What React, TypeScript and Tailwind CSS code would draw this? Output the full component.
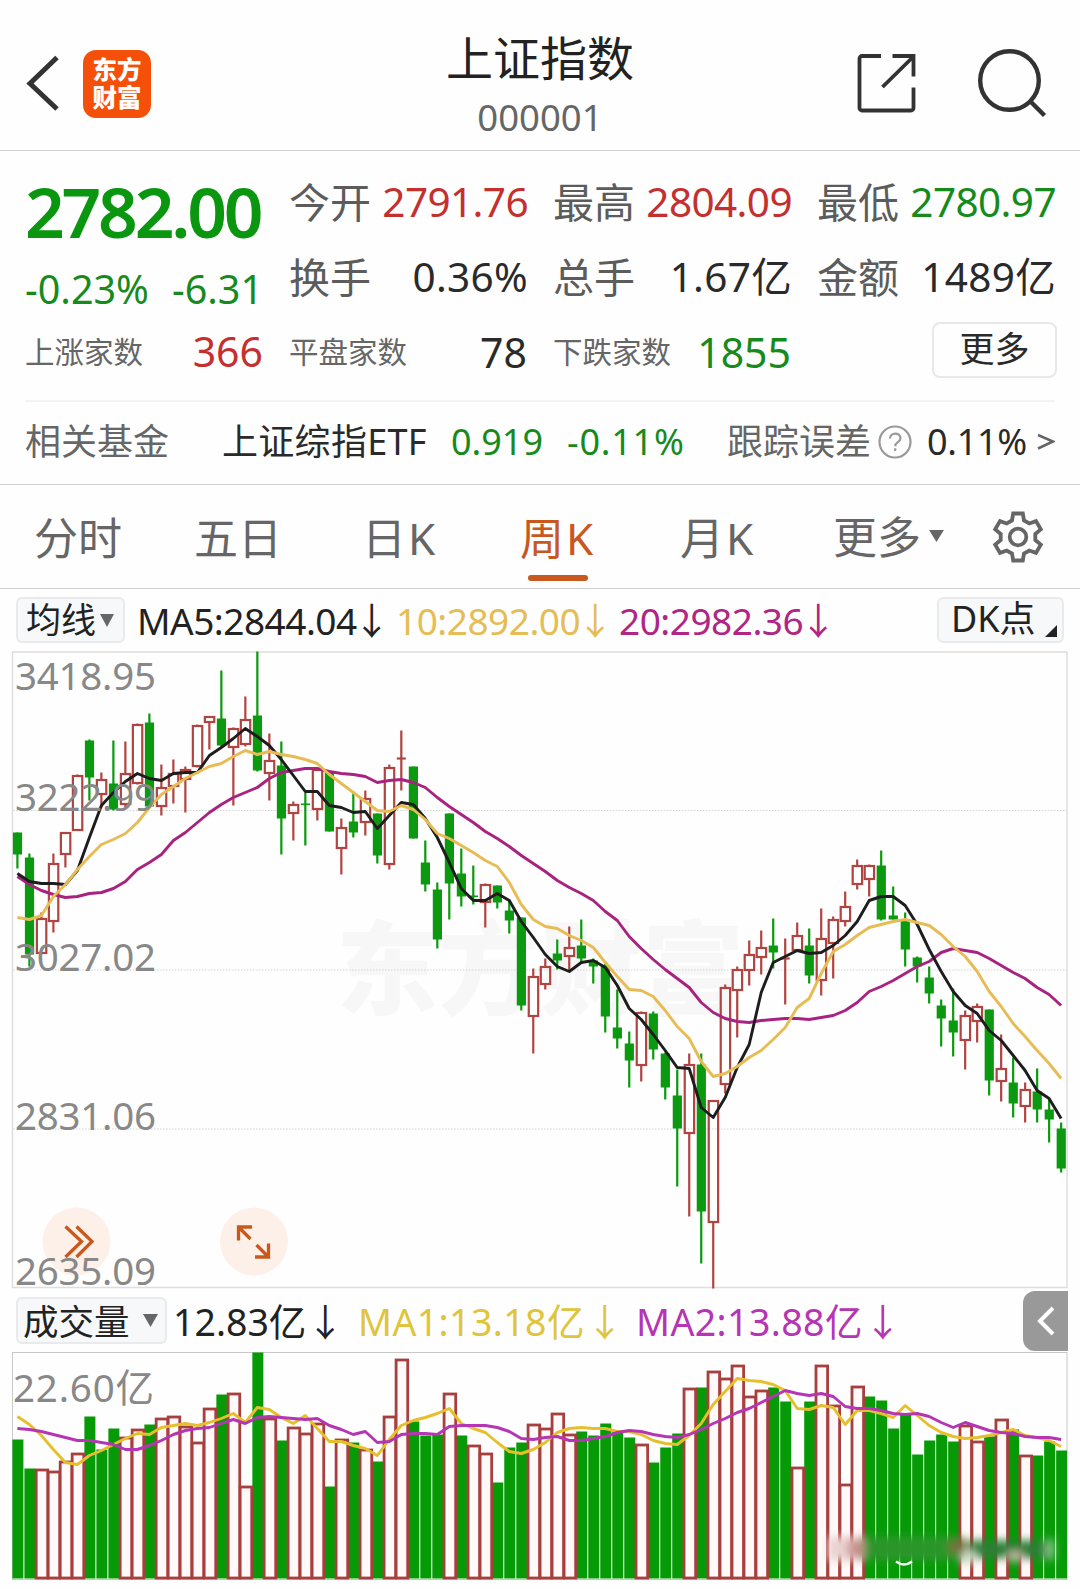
import React from "react";

type Candle = [string, number, number, number, number];

const STEP = 11.997;
const START = 17.4;
const cx = (i: number) => START + i * STEP;

// direction, body top, body bottom, high, low
const candles: Candle[] = [
  ["d", 833, 855, 833, 869], ["d", 858, 955, 854, 967], ["u", 919, 954, 913, 954], ["u", 864, 922, 854, 933],
  ["u", 833, 855, 833, 868], ["u", 776, 831, 775, 831], ["d", 741, 778, 740, 801], ["u", 780, 795, 773, 808],
  ["d", 784, 810, 741, 811], ["u", 774, 805, 742, 808], ["u", 725, 784, 724, 785], ["d", 723, 807, 714, 808],
  ["u", 788, 807, 765, 816], ["u", 774, 787, 760, 804], ["u", 770, 780, 767, 813], ["u", 726, 767, 725, 768],
  ["u", 717, 723, 717, 750], ["d", 719, 746, 671, 747], ["u", 729, 748, 728, 806], ["u", 720, 745, 697, 747],
  ["d", 716, 771, 652, 772], ["u", 761, 774, 734, 801], ["d", 766, 819, 742, 855], ["u", 805, 814, 802, 841],
  ["d", 804, 805, 793, 846], ["u", 770, 810, 769, 821], ["d", 772, 832, 772, 832], ["u", 828, 849, 819, 875],
  ["d", 822, 833, 792, 838], ["u", 799, 823, 791, 836], ["d", 814, 856, 814, 864], ["u", 768, 865, 765, 870],
  ["u", 759, 759, 731, 791], ["d", 767, 839, 767, 839], ["d", 863, 885, 841, 892], ["d", 890, 940, 883, 949],
  ["d", 814, 884, 814, 920], ["d", 874, 897, 849, 907], ["d", 896, 897, 866, 905], ["u", 885, 903, 884, 928],
  ["d", 886, 903, 886, 909], ["d", 911, 921, 900, 934], ["d", 918, 1006, 918, 1011], ["u", 977, 1017, 969, 1054],
  ["u", 967, 985, 959, 990], ["d", 954, 961, 940, 970], ["u", 948, 957, 927, 971], ["d", 946, 959, 920, 964],
  ["d", 961, 967, 959, 984], ["d", 966, 1017, 964, 1033], ["d", 1028, 1039, 990, 1049], ["d", 1044, 1061, 1032, 1088],
  ["u", 1013, 1066, 1012, 1082], ["d", 1014, 1050, 1012, 1060], ["d", 1054, 1088, 1053, 1100], ["d", 1096, 1129, 1070, 1187],
  ["u", 1065, 1134, 1054, 1217], ["d", 1065, 1212, 1054, 1264], ["u", 1101, 1223, 1101, 1289], ["u", 988, 1085, 985, 1094],
  ["u", 970, 991, 967, 1038], ["u", 955, 971, 941, 986], ["u", 948, 958, 931, 975], ["d", 946, 953, 919, 969],
  ["u", 959, 959, 939, 1005], ["u", 936, 951, 923, 951], ["d", 946, 976, 929, 984], ["u", 939, 981, 909, 996],
  ["u", 920, 944, 917, 979], ["u", 907, 922, 892, 927], ["u", 866, 885, 860, 890], ["u", 866, 880, 865, 897],
  ["d", 866, 920, 851, 921], ["d", 916, 920, 887, 920], ["d", 921, 950, 913, 967], ["d", 958, 967, 957, 983],
  ["d", 978, 994, 967, 1004], ["d", 1006, 1019, 1000, 1047], ["d", 1021, 1033, 989, 1057], ["u", 1016, 1041, 1011, 1070],
  ["u", 1007, 1022, 1004, 1043], ["d", 1010, 1081, 1010, 1096], ["u", 1069, 1082, 1035, 1102], ["d", 1083, 1104, 1058, 1118],
  ["u", 1090, 1107, 1083, 1123], ["d", 1092, 1110, 1069, 1123], ["d", 1110, 1120, 1100, 1143], ["d", 1129, 1169, 1123, 1173],
];

const ma5 = [
  874, 882, 884, 884, 885, 871, 838, 806, 793, 782, 774, 779, 781, 774, 773, 773, 756, 748, 739, 729, 737, 746,
  760, 776, 792, 792, 806, 808, 813, 812, 829, 816, 803, 805, 819, 838, 863, 889, 901, 901, 894, 901, 922, 938,
  955, 967, 972, 963, 961, 968, 986, 1009, 1020, 1035, 1051, 1068, 1069, 1108, 1118, 1098, 1068, 1045, 993, 963, 957, 951,
  954, 953, 946, 936, 922, 901, 897, 897, 906, 925, 950, 972, 992, 1006, 1014, 1031, 1041, 1056, 1071, 1091, 1099, 1119,
];

const ma10 = [
  918, 920, 916, 897, 885, 870, 857, 845, 840, 834, 823, 808, 795, 787, 779, 773, 767, 764, 757, 751, 755, 752,
  755, 757, 760, 764, 775, 784, 793, 802, 811, 812, 806, 810, 820, 834, 839, 846, 853, 861, 867, 883, 905, 920,
  927, 929, 936, 941, 948, 963, 977, 990, 991, 997, 1011, 1027, 1039, 1062, 1077, 1074, 1067, 1058, 1051, 1040, 1028, 1008,
  999, 974, 952, 945, 936, 928, 925, 922, 920, 923, 926, 935, 947, 957, 972, 992, 1007, 1024, 1037, 1051, 1064, 1079,
];

const ma20 = [
  877, 885, 891, 895, 898, 897, 894, 893, 889, 882, 870, 863, 855, 841, 833, 823, 813, 805, 798, 793, 788, 779,
  773, 771, 769, 769, 772, 774, 775, 777, 783, 781, 780, 783, 788, 798, 807, 815, 823, 832, 839, 847, 856, 864,
  872, 881, 888, 894, 901, 912, 921, 937, 949, 960, 970, 979, 988, 1003, 1013, 1019, 1022, 1023, 1021, 1020, 1019, 1019,
  1020, 1018, 1016, 1011, 1003, 992, 987, 981, 974, 967, 962, 953, 949, 951, 953, 959, 966, 973, 979, 988, 995, 1006,
];

const volumes = [
  1440, 1469, 1470, 1472, 1462, 1454, 1417, 1450, 1429, 1438, 1430, 1425, 1419, 1417, 1427, 1443, 1409, 1395, 1394, 1487, 1353, 1419,
  1441, 1428, 1434, 1424, 1487, 1440, 1443, 1450, 1462, 1417, 1360, 1422, 1436, 1435, 1394, 1436, 1446, 1454, 1483, 1448, 1443, 1425,
  1429, 1414, 1435, 1432, 1436, 1424, 1431, 1438, 1445, 1463, 1448, 1434, 1389, 1388, 1372, 1379, 1366, 1397, 1391, 1388, 1402, 1468,
  1402, 1366, 1406, 1485, 1387, 1397, 1401, 1429, 1415, 1455, 1441, 1435, 1442, 1426, 1442, 1437, 1420, 1430, 1456, 1456, 1442, 1451,
];

// up bars in the volume chart, everything else is a down bar
const upBars = new Set([
  2, 3, 4, 5, 9, 10, 12, 13, 14, 15, 16, 18, 19, 21, 23, 24, 25, 27, 29, 31, 32, 36, 38, 39, 43, 44, 45, 46, 52, 56,
  58, 59, 60, 61, 62, 65, 67, 68, 69, 70, 79, 80, 82, 84,
]);

const volMa1 = [
  1417, 1425, 1436, 1450, 1463, 1465, 1456, 1451, 1445, 1439, 1434, 1435, 1428, 1426, 1424, 1426, 1423, 1419, 1414, 1423, 1408, 1410,
  1418, 1424, 1416, 1429, 1442, 1442, 1446, 1449, 1456, 1440, 1426, 1421, 1418, 1414, 1409, 1424, 1429, 1433, 1443, 1452, 1454, 1450,
  1443, 1433, 1429, 1428, 1429, 1429, 1432, 1432, 1435, 1441, 1444, 1445, 1436, 1424, 1405, 1392, 1379, 1381, 1382, 1385, 1391, 1409,
  1410, 1406, 1408, 1425, 1411, 1411, 1414, 1418, 1406, 1416, 1426, 1433, 1437, 1439, 1438, 1436, 1433, 1430, 1436, 1438, 1441, 1447,
];

const volMa2 = [
  1429, 1430, 1432, 1435, 1438, 1441, 1441, 1443, 1445, 1450, 1450, 1446, 1441, 1435, 1431, 1429, 1428, 1424, 1420, 1424, 1418, 1417,
  1418, 1419, 1420, 1419, 1426, 1430, 1435, 1432, 1443, 1442, 1435, 1434, 1434, 1435, 1427, 1426, 1426, 1426, 1428, 1432, 1439, 1440,
  1438, 1437, 1441, 1441, 1439, 1437, 1433, 1431, 1432, 1435, 1437, 1438, 1435, 1430, 1424, 1419, 1413, 1409, 1403, 1397, 1391, 1394,
  1396, 1394, 1397, 1407, 1409, 1409, 1411, 1414, 1415, 1414, 1417, 1423, 1428, 1423, 1427, 1431, 1433, 1434, 1437, 1438, 1438, 1440,
];

const toPoints = (ys: number[]) => ys.map((y, i) => `${cx(i).toFixed(1)},${y}`).join(" ");

const Line = ({ data, color }: { data: number[]; color: string }) => (
  <polyline points={toPoints(data)} fill="none" stroke={color} strokeWidth={2.9} strokeLinejoin="round" />
);

const Header = () => (
  <header className="flex h-[151px] items-start justify-between border-b border-[#d2d2d2] pl-[25px] pr-[33px]">
    <div className="flex w-[240px] items-center pt-[50px]">
      <svg width="36" height="68" viewBox="0 0 36 68" fill="none" stroke="#333" strokeWidth="5">
        <path d="M32 7.500 5 33.500 32 59" />
      </svg>
      <div className="ml-[22px] flex h-[68px] w-[68px] flex-col items-center justify-center rounded-[13px] bg-[#f4500a] text-[24.500px] font-black leading-[28px] text-white">
        <span>东方</span>
        <span>财富</span>
      </div>
    </div>
    <div className="flex flex-col items-center pl-[8px] pt-[31px]">
      <h1 className="text-[47px] leading-[54px] text-[#222]">上证指数</h1>
      <p className="mt-[10px] text-[36.500px] leading-[44px] text-[#666]">000001</p>
    </div>
    <div className="flex w-[240px] justify-end pt-[46px]">
      <svg width="62" height="72" viewBox="856 46 62 72" fill="none" stroke="#333" strokeWidth="3.800">
        <path d="M881 56H862a2.500 2.500 0 0 0-2.500 2.500V108a2.500 2.500 0 0 0 2.500 2.500H911a2.500 2.500 0 0 0 2.500-2.500V87.500" />
        <path d="M892.500 56H913.500V76.500M913 57 882.500 87" />
      </svg>
      <svg className="ml-[58px]" width="71" height="72" viewBox="976 46 71 72" fill="none" stroke="#333" strokeWidth="4.400">
        <circle cx="1009.500" cy="80.500" r="29.300" />
        <path d="M1030 101 1044.500 115.500" />
      </svg>
    </div>
  </header>
);

const stats = [
  { label: "今开", value: "2791.76", color: "text-[#c4302f]" },
  { label: "最高", value: "2804.09", color: "text-[#c4302f]" },
  { label: "最低", value: "2780.97", color: "text-[#168b1c]" },
  { label: "换手", value: "0.36%", color: "text-[#2a2a2a]" },
  { label: "总手", value: "1.67亿", color: "text-[#2a2a2a]" },
  { label: "金额", value: "1489亿", color: "text-[#2a2a2a]" },
];

const Quote = () => (
  <section className="px-[25px]">
    <div className="flex h-[251px] gap-[26px] border-b-2 border-[#f4f4f4] pt-[14px]">
      <div className="flex w-[238px] flex-col">
        <div className="flex h-[92px] items-center text-[69.500px] font-semibold leading-[92px] tracking-[-3.200px] text-[#0b960f]">
          2782.00
        </div>
        <div className="flex h-[65px] items-center justify-between text-[39.500px] text-[#168b1c]">
          <span>-0.23%</span>
          <span>-6.31</span>
        </div>
        <div className="flex h-[60px] items-center justify-between">
          <span className="text-[29.500px] text-[#666]">上涨家数</span>
          <span className="text-[41px] text-[#c4302f]">366</span>
        </div>
      </div>
      <div className="grid h-[225px] w-[766px] grid-cols-3 grid-rows-3 gap-x-[26px]">
        {stats.map((s) => (
          <div key={s.label} className="flex items-center justify-between">
            <span className="text-[41px] text-[#5c5c5c]">{s.label}</span>
            <span className={`-mr-[1px] text-[40.500px] ${s.value.length > 6 ? "tracking-[-0.600px]" : "tracking-[0.300px]"} ${s.color}`}>
              {s.value}
            </span>
          </div>
        ))}
        <div className="flex items-center justify-between">
          <span className="text-[29.500px] text-[#666]">平盘家数</span>
          <span className="text-[41px] text-[#2a2a2a]">78</span>
        </div>
        <div className="flex items-center justify-between">
          <span className="text-[29.500px] text-[#666]">下跌家数</span>
          <span className="text-[41px] text-[#168b1c]">1855</span>
        </div>
        <div className="flex items-center justify-end pb-[6px]">
          <button className="-mr-[2px] h-[56px] w-[125px] rounded-[8px] border-2 border-[#e8e8e8] pb-[2px] text-[35px] leading-[50px] text-[#2a2a2a]">
            更多
          </button>
        </div>
      </div>
    </div>
    <div className="flex h-[82px] items-center pb-[2px] text-[36px]">
      <span className="w-[197px] text-[#666]">相关基金</span>
      <span className="w-[229px] tracking-[0.300px] text-[#2a2a2a]">上证综指ETF</span>
      <span className="w-[116px] text-[#168b1c]">0.919</span>
      <span className="w-[160px] tracking-[0.800px] text-[#168b1c]">-0.11%</span>
      <span className="text-[#666]">跟踪误差</span>
      <svg className="ml-[7px]" width="34" height="34" viewBox="0 0 34 34" fill="none" stroke="#999" strokeWidth="2.200">
        <circle cx="17" cy="17" r="15.500" />
        <path d="M12 13.500c0-6.500 10.500-6.500 10.500-.3 0 4-5.300 4-5.300 8M17.200 23.300v2.700" />
      </svg>
      <span className="ml-[15px] tracking-[-0.300px] text-[#2a2a2a]">0.11%</span>
      <svg className="ml-auto" width="18" height="18" viewBox="0 0 18 18" fill="none" stroke="#666" strokeWidth="2.600">
        <path d="M1 2 16 8.500 1 15.500" />
      </svg>
    </div>
  </section>
);

const tabs = [
  { name: "分时", width: "w-[160px]" },
  { name: "五日", width: "w-[168px]" },
  { name: "日K", width: "w-[158px]" },
  { name: "周K", width: "w-[160px]" },
  { name: "月K", width: "w-[153px]" },
];

const Tabs = () => (
  <nav className="flex h-[105px] items-stretch border-y border-[#cfcfcf] pl-[34px] text-[44px] text-[#666]">
    {tabs.map((t) => (
      <div key={t.name} className={`${t.width} pt-[20px]`}>
        <div className={`inline-flex flex-col items-center leading-[60px] ${t.name === "周K" ? "text-[#c8581e]" : ""}`}>
          <span className={t.name.endsWith("K") ? "tracking-[2px]" : ""}>{t.name}</span>
          {t.name === "周K" && <span className="mt-[7px] h-[6px] w-[60px] rounded-full bg-[#c8581e]" />}
        </div>
      </div>
    ))}
    <div className="flex w-[158px] items-center">
      更多
      <svg className="ml-[8px]" width="15" height="13" viewBox="0 0 16 14" fill="#666">
        <path d="M0 0H16L8 13Z" />
      </svg>
    </div>
    <svg className="self-center" width="54" height="54" viewBox="-27 -27 54 54" fill="none" stroke="#666" strokeWidth="3.800">
      <path d="M-4.800-23.500H4.800L6-16.500 11.300-13.500 18-15.900 22.800-7.600 17.300-3V3L22.800 7.600 18 15.900 11.300 13.500 6 16.500 4.800 23.500H-4.800L-6 16.500-11.300 13.500-18 15.900-22.800 7.600-17.300 3V-3L-22.800-7.600-18-15.900-11.300-13.500-6-16.500Z" />
      <circle r="8.300" />
    </svg>
  </nav>
);

const Down = () => (
  <span className="inline-block w-[30px] text-center font-['Noto_Sans_CJK_SC',sans-serif] tracking-normal">
    <span className="-mx-[6px]">↓</span>
  </span>
);

const PriceLegend = () => (
  <div className="flex h-[62px] items-center pl-[16px] pr-[16px] text-[37px] leading-[44px] tracking-[-0.500px]">
    <button className="flex h-[46px] w-[109px] items-center rounded-[6px] border-2 border-[#e8eaec] bg-[#f6f8fa] pl-[8px] text-[35px] leading-[40px] tracking-normal text-[#222]">
      均线
      <svg className="ml-[4px]" width="14" height="13" viewBox="0 0 14 13" fill="#666">
        <path d="M0 0H14L7 13Z" />
      </svg>
    </button>
    <span className="ml-[12px] w-[259px] text-[#222]">
      MA5:2844.04
      <Down />
    </span>
    <span className="w-[223px] text-[#e5bd55]">
      10:2892.00
      <Down />
    </span>
    <span className="text-[#b02585]">
      20:2982.36
      <Down />
    </span>
    <button className="ml-auto flex h-[46px] w-[127px] items-end justify-between rounded-[6px] border-2 border-[#e8eaec] bg-[#f6f8fa] pb-[4px] pl-[12px] pr-[5px] text-[36px] leading-[36px] tracking-normal text-[#222]">
      DK点
      <svg width="12" height="12" viewBox="0 0 12 12" fill="#222">
        <path d="M12 0V12H0Z" />
      </svg>
    </button>
  </div>
);

const axis = [
  { label: "3418.95", y: 690 },
  { label: "3222.99", y: 811 },
  { label: "3027.02", y: 971 },
  { label: "2831.06", y: 1130 },
  { label: "2635.09", y: 1285 },
];

const PriceChart = () => (
  <svg className="block" width="1080" height="638" viewBox="0 651.500 1080 638">
    <text x="336" y="1007" fontSize="102" fontWeight="900" fill="#f7f7f7">
      东方财富
    </text>
    {[811, 970.5, 1129.5].map((y) => (
      <line key={y} x1="13" x2="1067" y1={y} y2={y} stroke="#d4d4d4" strokeWidth="1.200" strokeDasharray="1.500 1.500" />
    ))}
    <rect x="12.500" y="652.500" width="1054.500" height="635.500" fill="none" stroke="#dedede" strokeWidth="1.500" />
    <circle cx="76.500" cy="1242" r="34" fill="#fdf0e8" />
    <circle cx="254" cy="1242" r="34" fill="#fdf0e8" />
    <g fill="none" stroke="#c8581e" strokeWidth="3.300">
      <path d="M65.500 1227 81.500 1242 65.500 1257.500M76.500 1227 92 1242 76.500 1257.500" />
      <path d="M252 1227.500H238.500V1241M238.500 1227.500 250.500 1239.500M255 1257.500H268.500V1244M268.500 1257.500 256.500 1245.500" />
    </g>
    {candles.map(([dir, top, bottom, high, low], i) => {
      const x = cx(i);
      if (dir === "d") {
        return (
          <g key={i} fill="#0b9a0f">
            <rect x={x - 1.1} y={high} width={2.2} height={low - high} />
            <rect x={x - 4.5} y={top} width={9.2} height={Math.max(bottom - top, 1.6)} />
          </g>
        );
      }
      return (
        <g key={i} fill="none" stroke="#b04441" strokeWidth={2.2}>
          <path d={`M${x} ${high}V${top}M${x} ${bottom}V${low}`} />
          {bottom - top < 2 ? (
            <path d={`M${x - 4.5} ${top}H${x + 4.5}`} />
          ) : (
            <rect x={x - 4.5} y={top + 0.5} width={9.4} height={bottom - top - 1} />
          )}
        </g>
      );
    })}
    <Line data={ma20} color="#a8237f" />
    <Line data={ma5} color="#1d1d1d" />
    <Line data={ma10} color="#e8bc55" />
    {axis.map((a) => (
      <text key={a.label} x="15" y={a.y} fontSize="38.500" fill="#888" textLength="141">
        {a.label}
      </text>
    ))}
  </svg>
);

const VolumeLegend = () => (
  <div className="flex h-[63px] items-center pl-[16px] pr-[12px] text-[37.500px] leading-[44px]">
    <button className="flex h-[47px] w-[151px] items-center rounded-[6px] border-2 border-[#e8eaec] bg-[#f6f8fa] pl-[5px] text-[35.500px] leading-[40px] text-[#222]">
      成交量
      <svg className="ml-[13px]" width="15" height="13" viewBox="0 0 15 13" fill="#666">
        <path d="M0 0H15L7.500 13Z" />
      </svg>
    </button>
    <span className="ml-[6px] w-[185px] text-[#222]">
      <span className="mr-[4px]">12.83亿</span>
      <Down />
    </span>
    <span className="w-[278px] text-[#dfc43c]">
      <span className="mr-[5px] tracking-[0.400px]">MA1:13.18亿</span>
      <Down />
    </span>
    <span className="text-[#b535b5]">
      <span className="mr-[5px] tracking-[0.400px]">MA2:13.88亿</span>
      <Down />
    </span>
    <button className="ml-auto flex h-[60px] w-[45px] items-center justify-center rounded-l-[12px] bg-[#999]">
      <svg width="18" height="30" viewBox="0 0 18 30" fill="none" stroke="#fff" strokeWidth="4">
        <path d="M16 2 3 15 16 28" />
      </svg>
    </button>
  </div>
);

const VolumeChart = () => (
  <svg className="block" width="1080" height="236" viewBox="0 1352.500 1080 236">
    <defs>
      <filter id="soft" x="-10%" y="-50%" width="120%" height="200%">
        <feGaussianBlur stdDeviation="4" />
      </filter>
    </defs>
    <rect x="12.500" y="1353" width="1054.500" height="227" fill="none" stroke="#c8c8c8" />
    {volumes.map((top, i) =>
      upBars.has(i) ? null : (
        <rect key={i} x={cx(i) - 5} y={top} width={11} height={1579 - top} fill="#079a07" />
      )
    )}
    {volumes.map((top, i) =>
      upBars.has(i) ? (
        <rect key={i} x={cx(i) - 5.2} y={top + 0.5} width={11.6} height={1578 - top} fill="#fffaf9" stroke="#a63f3d" strokeWidth={2.8} />
      ) : null
    )}
    <Line data={volMa1} color="#e6c02c" />
    <Line data={volMa2} color="#b535b5" />
    <text x="13" y="1402" fontSize="38.500" fill="#888" textLength="141">
      22.60亿
    </text>
    {/* smudged signature strip */}
    <g filter="url(#soft)">
      <rect x="828" y="1537" width="34" height="24" fill="#ead2d0" />
      <rect x="862" y="1537" width="100" height="24" fill="#2a962a" />
      <rect x="848" y="1540" width="16" height="18" fill="#c9908d" />
      <rect x="950" y="1540" width="16" height="14" fill="#7a6a3c" />
      <rect x="968" y="1541" width="80" height="18" fill="#2c7f35" />
      <rect x="962" y="1552" width="14" height="12" fill="#cfe0c8" />
      <rect x="1008" y="1552" width="14" height="10" fill="#c9b8a8" />
      <rect x="1046" y="1540" width="8" height="20" fill="#8cc890" />
    </g>
    <path d="M896 1562q8 6 16 0" fill="none" stroke="#f5f5f5" strokeWidth="2.500" />
  </svg>
);

export default function App() {
  return (
    <div className="h-[1589px] w-[1080px] overflow-hidden whitespace-nowrap bg-[#fefefe] font-['Noto_Sans','Noto_Sans_CJK_SC',sans-serif]">
      <Header />
      <Quote />
      <Tabs />
      <PriceLegend />
      <PriceChart />
      <VolumeLegend />
      <VolumeChart />
    </div>
  );
}
